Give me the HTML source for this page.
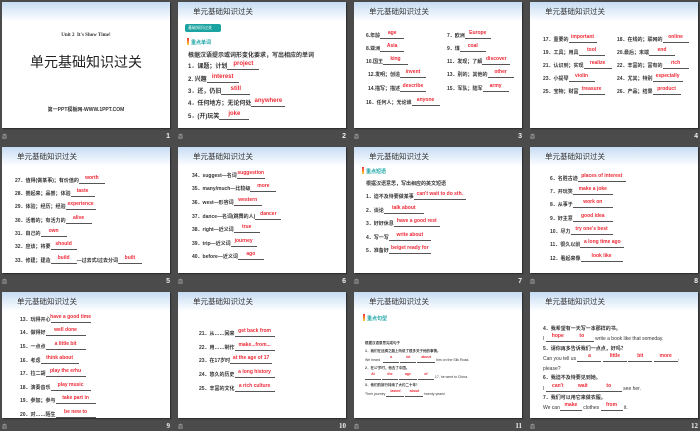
<!DOCTYPE html>
<html><head><meta charset="utf-8"><style>
*{margin:0;padding:0;box-sizing:border-box}
body{width:700px;height:431px;background:#4b4b4b;position:relative;overflow:hidden;font-family:"Liberation Sans","Noto Sans CJK SC",sans-serif}
.s{position:absolute;width:168px;height:126px;background:#fff;overflow:hidden;box-shadow:1px 1px 1px #2a2a2a}
.h{position:absolute;left:0;top:0;width:100%;height:18px;background:linear-gradient(#c7dcf3,#fbfdff)}
.h span{position:absolute;left:15px;top:4px;font-size:7.5px;color:#333}
.l{position:absolute;font-size:5px;font-weight:bold;color:#333;white-space:nowrap;line-height:6px}
.l u{display:inline-block;text-decoration:none;border-bottom:.6px solid #555;height:6px;position:relative;vertical-align:bottom}
.l u i{position:absolute;left:50%;transform:translateX(-50%);top:-3px;color:#ee2a36;font-style:normal;font-weight:bold;white-space:nowrap}
.c{position:absolute;font-size:5px;color:#ccc}
.n{position:absolute;font-size:7px;font-weight:bold;color:#eee;text-align:right;width:20px}
.bd{position:absolute;font-size:5px;color:#19a3a3;font-weight:bold}
.bd:before{content:"";position:absolute;left:-4px;top:-1px;width:1.5px;height:7px;background:linear-gradient(#e33,#fc3)}
</style></head><body>

<div class="s" style="left:2px;top:2px">
<div class="h"></div>
<div style="position:absolute;left:0;width:100%;top:31px;text-align:center;font-family:'Liberation Serif',serif;font-weight:bold;font-size:5px;color:#333">Unit 2&nbsp;&nbsp;It's Show Time!</div>
<div style="position:absolute;left:0;width:100%;top:50px;text-align:center;font-size:14px;color:#222">单元基础知识过关</div>
<div style="position:absolute;left:0;width:100%;top:104px;text-align:center;font-size:5px;font-weight:bold;color:#333">第一PPT模板网-WWW.1PPT.COM</div>
</div>

<div class="s" style="left:178px;top:2px">
<div class="h"><span>单元基础知识过关</span></div>
<div style="position:absolute;left:7px;top:22px;width:36px;height:8px;background:#1aa3a0;border-radius:2px;font-size:4px;color:#fff;padding:1px 3px">基础知识过关</div>
<div class="bd" style="left:13px;top:37px">重点单词</div>
<div class="l" style="left:10px;top:51px;font-size:6px">根据汉语提示或词形变化要求，写出相应的单词</div>
<div class="l" style="left:10px;top:62px;font-size:6px">1．课题；计划<u style="width:32px"><i>project</i></u></div>
<div class="l" style="left:10px;top:75px;font-size:6px">2. 兴趣<u style="width:32px"><i>interest</i></u></div>
<div class="l" style="left:10px;top:87px;font-size:6px">3．还，仍旧<u style="width:29px"><i>still</i></u></div>
<div class="l" style="left:10px;top:99px;font-size:6px">4．任何地方；无论何处<u style="width:34px"><i>anywhere</i></u></div>
<div class="l" style="left:10px;top:112px;font-size:6px">5．(开)玩笑<u style="width:30px"><i>joke</i></u></div>
</div>

<div class="s" style="left:354px;top:2px">
<div class="h"><span>单元基础知识过关</span></div>
<div class="l" style="left:12px;top:31px">6.年龄<u style="width:24px"><i>age</i></u></div>
<div class="l" style="left:12px;top:44px">8.亚洲<u style="width:24px"><i>Asia</i></u></div>
<div class="l" style="left:12px;top:57px">10.国王<u style="width:25px"><i>king</i></u></div>
<div class="l" style="left:14px;top:70px">12.发明；创造<u style="width:26px"><i>invent</i></u></div>
<div class="l" style="left:14px;top:84px">14.描写；描述<u style="width:26px"><i>describe</i></u></div>
<div class="l" style="left:12px;top:98px">16．任何人；无论谁<u style="width:28px"><i>anyone</i></u></div>
<div class="l" style="left:93px;top:31px">7．欧洲<u style="width:26px"><i>Europe</i></u></div>
<div class="l" style="left:93px;top:44px">9．煤<u style="width:26px"><i>coal</i></u></div>
<div class="l" style="left:93px;top:57px">11．发现；了解<u style="width:28px"><i>discover</i></u></div>
<div class="l" style="left:93px;top:70px">13．别的；其他的<u style="width:26px"><i>other</i></u></div>
<div class="l" style="left:93px;top:84px">15．军队；陆军<u style="width:26px"><i>army</i></u></div>
</div>

<div class="s" style="left:530px;top:2px">
<div class="h"><span>单元基础知识过关</span></div>
<div class="l" style="left:13px;top:35px">17．重要的<u style="width:28px"><i>important</i></u></div>
<div class="l" style="left:13px;top:48px">19．工具；用具<u style="width:26px"><i>tool</i></u></div>
<div class="l" style="left:13px;top:61px">21．认识到；实现<u style="width:28px"><i>realize</i></u></div>
<div class="l" style="left:13px;top:74px">23．小提琴<u style="width:26px"><i>violin</i></u></div>
<div class="l" style="left:13px;top:87px">25．宝物；财富<u style="width:26px"><i>treasure</i></u></div>
<div class="l" style="left:87px;top:35px">18．在线的；联网的<u style="width:26px"><i>online</i></u></div>
<div class="l" style="left:87px;top:48px">20.最后；末端<u style="width:26px"><i>end</i></u></div>
<div class="l" style="left:87px;top:61px">22．丰富的；富有的<u style="width:26px"><i>rich</i></u></div>
<div class="l" style="left:87px;top:74px">24．尤其；特别<u style="width:30px"><i>especially</i></u></div>
<div class="l" style="left:87px;top:87px">26．产品；结果<u style="width:28px"><i>product</i></u></div>
</div>

<div class="s" style="left:2px;top:147px">
<div class="h"><span>单元基础知识过关</span></div>
<div class="l" style="left:13px;top:31px">27．值得(做某事)；有价值的<u style="width:26px"><i>worth</i></u></div>
<div class="l" style="left:13px;top:44px">28．尝起来；品尝；体验<u style="width:24px"><i>taste</i></u></div>
<div class="l" style="left:13px;top:57px">29．体验；经历；经验<u style="width:30px"><i>experience</i></u></div>
<div class="l" style="left:13px;top:71px">30．活着的；有活力的<u style="width:26px"><i>alive</i></u></div>
<div class="l" style="left:13px;top:84px">31．自己的<u style="width:26px"><i>own</i></u></div>
<div class="l" style="left:13px;top:97px">32．应该；将要<u style="width:26px"><i>should</i></u></div>
<div class="l" style="left:13px;top:111px">33．修建；建造<u style="width:26px"><i>build</i></u>—过去式/过去分词<u style="width:24px"><i>built</i></u></div>
</div>

<div class="s" style="left:178px;top:147px">
<div class="h"><span>单元基础知识过关</span></div>
<div class="l" style="left:14px;top:26px">34．suggest—名词<u style="width:28px"><i>suggestion</i></u></div>
<div class="l" style="left:14px;top:39px">35．many/much—比较级<u style="width:26px"><i>more</i></u></div>
<div class="l" style="left:14px;top:53px">36．west—形容词<u style="width:28px"><i>western</i></u></div>
<div class="l" style="left:14px;top:67px">37．dance—名词(跳舞的人)<u style="width:26px"><i>dancer</i></u></div>
<div class="l" style="left:14px;top:80px">38．right—近义词<u style="width:26px"><i>true</i></u></div>
<div class="l" style="left:14px;top:94px">39．trip—近义词<u style="width:26px"><i>journey</i></u></div>
<div class="l" style="left:14px;top:107px">40．before—近义词<u style="width:26px"><i>ago</i></u></div>
</div>

<div class="s" style="left:354px;top:147px">
<div class="h"><span>单元基础知识过关</span></div>
<div class="bd" style="left:12px;top:21px">重点短语</div>
<div class="l" style="left:12px;top:34px">根据汉语意思，写出相应的英文短语</div>
<div class="l" style="left:12px;top:47px">1．迫不及待要做某事<u style="width:52px"><i>can't wait to do sth.</i></u></div>
<div class="l" style="left:12px;top:61px">2．谈论<u style="width:40px"><i>talk about</i></u></div>
<div class="l" style="left:12px;top:74px">3．好好休息<u style="width:46px"><i>have a good rest</i></u></div>
<div class="l" style="left:12px;top:88px">4．写一写<u style="width:42px"><i>write about</i></u></div>
<div class="l" style="left:12px;top:101px">5．准备好<u style="width:42px"><i>be/get ready for</i></u></div>
</div>

<div class="s" style="left:530px;top:147px">
<div class="h"><span>单元基础知识过关</span></div>
<div class="l" style="left:20px;top:29px">6．名胜古迹<u style="width:48px"><i>places of interest</i></u></div>
<div class="l" style="left:20px;top:42px">7．开玩笑<u style="width:40px"><i>make a joke</i></u></div>
<div class="l" style="left:20px;top:55px">8．从事于<u style="width:40px"><i>work on</i></u></div>
<div class="l" style="left:20px;top:69px">9．好主意<u style="width:40px"><i>good idea</i></u></div>
<div class="l" style="left:20px;top:82px">10．尽力<u style="width:42px"><i>try one's best</i></u></div>
<div class="l" style="left:20px;top:95px">11．很久以前<u style="width:44px"><i>a long time ago</i></u></div>
<div class="l" style="left:20px;top:109px">12．看起来像<u style="width:42px"><i>look like</i></u></div>
</div>

<div class="s" style="left:2px;top:292px">
<div class="h"><span>单元基础知识过关</span></div>
<div class="l" style="left:18px;top:25px">13．玩得开心<u style="width:40px"><i>have a good time</i></u></div>
<div class="l" style="left:18px;top:38px">14．做得好<u style="width:40px"><i>well done</i></u></div>
<div class="l" style="left:18px;top:52px">15．一点点<u style="width:40px"><i>a little bit</i></u></div>
<div class="l" style="left:18px;top:66px">16．考虑<u style="width:38px"><i>think about</i></u></div>
<div class="l" style="left:18px;top:79px">17．拉二胡<u style="width:40px"><i>play the erhu</i></u></div>
<div class="l" style="left:18px;top:93px">18．演奏音乐<u style="width:40px"><i>play music</i></u></div>
<div class="l" style="left:18px;top:106px">19．参加；参与<u style="width:40px"><i>take part in</i></u></div>
<div class="l" style="left:18px;top:120px">20．对……陌生<u style="width:40px"><i>be new to</i></u></div>
</div>

<div class="s" style="left:178px;top:292px">
<div class="h"><span>单元基础知识过关</span></div>
<div class="l" style="left:21px;top:39px">21．从……回来<u style="width:40px"><i>get back from</i></u></div>
<div class="l" style="left:21px;top:53px">22．用……制作<u style="width:40px"><i>make...from...</i></u></div>
<div class="l" style="left:21px;top:66px">23．在17岁时<u style="width:42px"><i>at the age of 17</i></u></div>
<div class="l" style="left:21px;top:80px">24．悠久的历史<u style="width:40px"><i>a long history</i></u></div>
<div class="l" style="left:21px;top:94px">25．丰富的文化<u style="width:40px"><i>a rich culture</i></u></div>
</div>

<div class="s" style="left:354px;top:292px">
<div class="h"><span>单元基础知识过关</span></div>
<div class="bd" style="left:13px;top:23px">重点句型</div>
<div class="l" style="left:11px;top:48px;font-size:3.5px">根据汉语意思完成句子</div>
<div class="l" style="left:11px;top:56px;font-size:3.5px">1．我们在丝绸之路上听说了很多关于他的事情。</div>
<div class="l" style="left:11px;top:65px;font-size:3.5px;font-weight:normal">We heard<u style="width:16px;margin-left:3px"><i>a</i></u> <u style="width:16px"><i>lot</i></u> <u style="width:18px"><i>about</i></u> him on the Silk Road.</div>
<div class="l" style="left:11px;top:73px;font-size:3.5px">2．在17岁时，他去了中国。</div>
<div class="l" style="left:11px;top:82px;font-size:3.5px;font-weight:normal"><u style="width:16px"><i>At</i></u> <u style="width:16px"><i>the</i></u> <u style="width:18px"><i>age</i></u> <u style="width:16px"><i>of</i></u> 17, he went to China.</div>
<div class="l" style="left:11px;top:90px;font-size:3.5px">3．他们的旅行持续了大约二十年！</div>
<div class="l" style="left:11px;top:99px;font-size:3.5px;font-weight:normal">Their journey <u style="width:18px"><i>lasted</i></u> <u style="width:18px"><i>about</i></u> twenty years!</div>
</div>

<div class="s" style="left:530px;top:292px">
<div class="h"><span>单元基础知识过关</span></div>
<div class="l" style="left:13px;top:34px">4．我希望有一天写一本那样的书。</div>
<div class="l" style="left:13px;top:44px;font-weight:normal">I <u style="width:24px"><i>hope</i></u><u style="width:24px"><i>to</i></u> write a book like that someday.</div>
<div class="l" style="left:13px;top:54px">5．请你再多告诉我们一点点，好吗？</div>
<div class="l" style="left:13px;top:64px;font-weight:normal">Can you tell us <u style="width:24px"><i>a</i></u> <u style="width:24px"><i>little</i></u> <u style="width:24px"><i>bit</i></u> <u style="width:24px"><i>more</i></u>,</div>
<div class="l" style="left:13px;top:74px;font-weight:normal">please?</div>
<div class="l" style="left:13px;top:83px">6．我迫不及待要见到她。</div>
<div class="l" style="left:13px;top:94px;font-weight:normal">I <u style="width:24px"><i>can't</i></u><u style="width:26px"><i>wait</i></u><u style="width:26px"><i>to</i></u> see her.</div>
<div class="l" style="left:13px;top:103px">7．我们可以用它来做衣服。</div>
<div class="l" style="left:13px;top:113px;font-weight:normal">We can<u style="width:22px"><i>make</i></u> clothes <u style="width:22px"><i>from</i></u> it.</div>
</div>

<div class="c" style="left:2px;top:133px">㳫</div><div class="n" style="left:150px;top:133px">1</div>
<div class="c" style="left:178px;top:133px">㳫</div><div class="n" style="left:326px;top:133px">2</div>
<div class="c" style="left:354px;top:133px">㳫</div><div class="n" style="left:502px;top:133px">3</div>
<div class="c" style="left:530px;top:133px">㳫</div><div class="n" style="left:678px;top:133px">4</div>
<div class="c" style="left:2px;top:278px">㳫</div><div class="n" style="left:150px;top:278px">5</div>
<div class="c" style="left:178px;top:278px">㳫</div><div class="n" style="left:326px;top:278px">6</div>
<div class="c" style="left:354px;top:278px">㳫</div><div class="n" style="left:502px;top:278px">7</div>
<div class="c" style="left:530px;top:278px">㳫</div><div class="n" style="left:678px;top:278px">8</div>
<div class="c" style="left:2px;top:423px">㳫</div><div class="n" style="left:150px;top:422px;font-family:'Liberation Serif',serif">9</div>
<div class="c" style="left:178px;top:423px">㳫</div><div class="n" style="left:326px;top:422px;font-family:'Liberation Serif',serif">10</div>
<div class="c" style="left:354px;top:423px">㳫</div><div class="n" style="left:502px;top:422px;font-family:'Liberation Serif',serif">11</div>
<div class="c" style="left:530px;top:423px">㳫</div><div class="n" style="left:678px;top:422px;font-family:'Liberation Serif',serif">12</div>
</body></html>
